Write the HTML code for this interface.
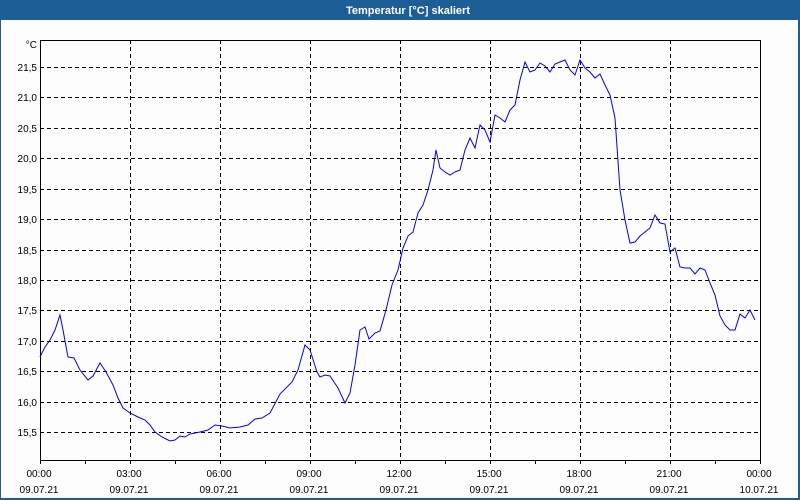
<!DOCTYPE html>
<html><head><style>
html,body{margin:0;padding:0;width:800px;height:500px;overflow:hidden;background:#fcfdfc;}
</style></head><body>
<svg width="800" height="500" xmlns="http://www.w3.org/2000/svg" style="display:block;font-family:'Liberation Sans',sans-serif">
<rect x="0" y="0" width="800" height="500" fill="#fcfdfc"/>
<rect x="0" y="0" width="800" height="20" fill="#1d5e96"/>
<rect x="0" y="20" width="1" height="480" fill="#1d5e96"/>
<rect x="798" y="20" width="2" height="480" fill="#1d5e96"/>
<rect x="0" y="498" width="800" height="2" fill="#1d5e96"/>
<text x="408" y="14" text-anchor="middle" fill="#fff" font-size="11" font-weight="bold">Temperatur [°C] skaliert</text>
<g stroke="#000" stroke-width="1" stroke-dasharray="4,3" shape-rendering="crispEdges">
<line x1="40" x2="760" y1="67.5" y2="67.5"/><line x1="40" x2="760" y1="97.5" y2="97.5"/>
<line x1="40" x2="760" y1="128.5" y2="128.5"/><line x1="40" x2="760" y1="158.5" y2="158.5"/>
<line x1="40" x2="760" y1="189.5" y2="189.5"/><line x1="40" x2="760" y1="219.5" y2="219.5"/>
<line x1="40" x2="760" y1="250.5" y2="250.5"/><line x1="40" x2="760" y1="280.5" y2="280.5"/>
<line x1="40" x2="760" y1="310.5" y2="310.5"/><line x1="40" x2="760" y1="341.5" y2="341.5"/>
<line x1="40" x2="760" y1="371.5" y2="371.5"/><line x1="40" x2="760" y1="402.5" y2="402.5"/>
<line x1="40" x2="760" y1="432.5" y2="432.5"/>
<line x1="130.5" x2="130.5" y1="40" y2="460"/><line x1="220.5" x2="220.5" y1="40" y2="460"/>
<line x1="310.5" x2="310.5" y1="40" y2="460"/><line x1="400.5" x2="400.5" y1="40" y2="460"/>
<line x1="490.5" x2="490.5" y1="40" y2="460"/><line x1="580.5" x2="580.5" y1="40" y2="460"/>
<line x1="670.5" x2="670.5" y1="40" y2="460"/>
</g>
<rect x="40.5" y="40.5" width="720" height="420" fill="none" stroke="#000" shape-rendering="crispEdges"/>
<g stroke="#000" shape-rendering="crispEdges">
<line x1="85.5" x2="85.5" y1="460" y2="464"/><line x1="175.5" x2="175.5" y1="460" y2="464"/>
<line x1="265.5" x2="265.5" y1="460" y2="464"/><line x1="355.5" x2="355.5" y1="460" y2="464"/>
<line x1="445.5" x2="445.5" y1="460" y2="464"/><line x1="535.5" x2="535.5" y1="460" y2="464"/>
<line x1="625.5" x2="625.5" y1="460" y2="464"/><line x1="715.5" x2="715.5" y1="460" y2="464"/>
<line x1="40.5" x2="40.5" y1="460" y2="464"/><line x1="130.5" x2="130.5" y1="460" y2="464"/>
<line x1="220.5" x2="220.5" y1="460" y2="464"/><line x1="310.5" x2="310.5" y1="460" y2="464"/>
<line x1="400.5" x2="400.5" y1="460" y2="464"/><line x1="490.5" x2="490.5" y1="460" y2="464"/>
<line x1="580.5" x2="580.5" y1="460" y2="464"/><line x1="670.5" x2="670.5" y1="460" y2="464"/>
<line x1="760.5" x2="760.5" y1="460" y2="464"/>
</g>
<g font-size="10" fill="#000" text-anchor="end">
<text x="37" y="48">°C</text>
<text x="37" y="71">21,5</text><text x="37" y="101">21,0</text><text x="37" y="132">20,5</text>
<text x="37" y="162">20,0</text><text x="37" y="193">19,5</text><text x="37" y="223">19,0</text>
<text x="37" y="254">18,5</text><text x="37" y="284">18,0</text><text x="37" y="314">17,5</text>
<text x="37" y="345">17,0</text><text x="37" y="375">16,5</text><text x="37" y="406">16,0</text>
<text x="37" y="436">15,5</text>
</g>
<g font-size="10" fill="#000" text-anchor="middle">
<text x="39" y="477">00:00</text><text x="39" y="493">09.07.21</text>
<text x="129" y="477">03:00</text><text x="129" y="493">09.07.21</text>
<text x="219" y="477">06:00</text><text x="219" y="493">09.07.21</text>
<text x="309" y="477">09:00</text><text x="309" y="493">09.07.21</text>
<text x="399" y="477">12:00</text><text x="399" y="493">09.07.21</text>
<text x="489" y="477">15:00</text><text x="489" y="493">09.07.21</text>
<text x="579" y="477">18:00</text><text x="579" y="493">09.07.21</text>
<text x="669" y="477">21:00</text><text x="669" y="493">09.07.21</text>
<text x="759" y="477">00:00</text><text x="759" y="493">10.07.21</text>
</g>
<polyline fill="none" stroke="#0000ff" stroke-width="1" points="40,357 45,347 50,340 55,330 60,315 63,330 68,357 74,358 80,370 88,380 93,376 100,363 106,372 113,385 118,398 123,408 130,413 138,417 145,420 150,425 155,432 162,437 170,441 175,440 180,436 185,437 190,434 200,432 208,430 215,425 222,426 230,428 240,427 248,425 255,419 262,418 270,413 280,394 292,382 298,370 305,345 310,350 317,372 320,377 325,375 330,376 338,388 345,403 350,393 355,365 360,330 365,327 369,339 375,333 380,331 386,310 392,285 398,270 403,248 408,236 413,232 418,213 423,205 428,190 433,170 436,150 440,168 445,172 450,175 455,172 460,170 465,150 470,138 475,148 480,125 485,130 490,142 495,115 500,118 505,122 510,110 515,105 520,80 525,62 530,72 535,70 540,63 545,66 550,72 555,64 560,62 565,60 570,70 575,75 580,60 585,68 590,72 595,78 600,74 605,85 610,95 615,118 620,190 625,220 630,243 635,242 640,236 645,232 650,228 655,215 660,223 665,224 670,252 675,248 680,267 685,268 690,268 695,274 700,268 705,270 710,283 715,295 720,316 725,325 730,330 735,330 740,314 745,318 750,310 755,320"/>
</svg>
</body></html>
